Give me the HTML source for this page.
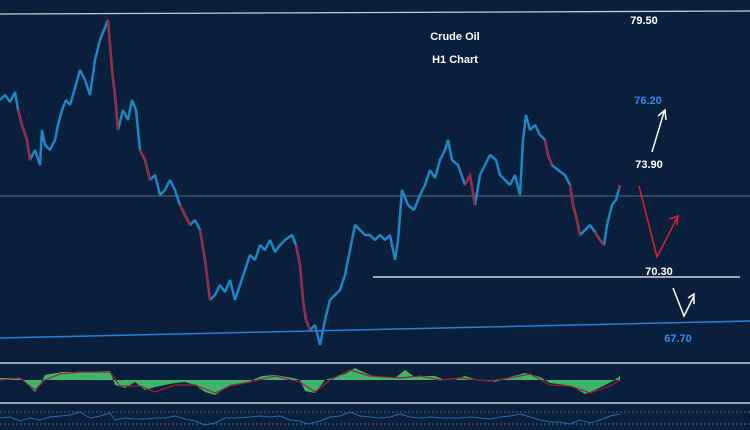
<!DOCTYPE html>
<html><head><meta charset="utf-8"><style>
html,body{margin:0;padding:0;background:#0a1f3b;width:750px;height:430px;overflow:hidden}
svg{display:block}
text{font-family:"Liberation Sans",sans-serif;font-weight:bold;font-size:11px}
</style></head><body>
<svg width="750" height="430" viewBox="0 0 750 430">
<rect width="750" height="430" fill="#0a1f3b"/>
<line x1="0" y1="14" x2="750" y2="11" stroke="#c8ccd2" stroke-width="1.3"/>
<line x1="0" y1="196" x2="750" y2="196" stroke="#5b6b80" stroke-width="1"/>
<line x1="373" y1="277" x2="740" y2="277" stroke="#d0d3d8" stroke-width="1.5"/>
<line x1="0" y1="338" x2="750" y2="321" stroke="#2a7fd6" stroke-width="1.5"/>
<polyline fill="none" stroke="#1f86c4" stroke-width="2.5" stroke-linejoin="bevel" points="0,100 5,95 10,102 15,92 18,110 22,125 27,140 30,160 35,150 40,165 42,130 45,145 50,150 55,140 58,125 62,110 66,100 70,105 75,88 80,70 85,80 90,95 95,60 100,40 104,30 108,20 110,45 112,70 115,95 118,130 123,110 128,120 132,100 136,110 140,150 145,160 150,180 155,175 160,195 165,190 170,180 175,190 180,205 185,215 190,225 195,220 200,230 205,260 210,300 215,295 220,285 225,292 230,280 235,300 240,285 245,270 250,255 255,260 260,245 265,250 270,240 275,252 280,245 285,240 292,235 296,245 300,265 303,300 306,320 310,330 315,325 320,345 325,320 330,300 335,295 340,290 345,275 350,250 355,225 360,230 365,235 370,235 375,240 380,235 385,240 390,235 395,260 398,240 402,190 408,205 414,210 420,195 425,185 430,170 435,178 440,160 445,150 448,140 452,160 458,165 465,185 470,175 475,205 480,175 485,165 490,155 496,160 500,175 505,180 510,185 515,175 520,195 523,140 526,115 530,130 535,125 540,135 545,140 548,155 552,165 558,170 565,175 570,185 573,205 577,220 580,235 585,230 590,225 595,232 600,240 604,245 607,225 612,205 616,200 620,185"/>
<g stroke="#b02030" stroke-width="2" fill="none">
<polyline points="18,110 22,125 27,140 30,160"/>
<polyline points="108,20 110,45 112,70 115,95 118,130"/>
<polyline points="140,150 145,160 150,180"/>
<polyline points="180,205 185,215 190,225"/>
<polyline points="200,230 205,260 210,300"/>
<polyline points="296,245 300,265 303,300 306,320 310,330"/>
<polyline points="465,185 470,175 475,205"/>
<polyline points="545,140 548,155 552,165"/>
<polyline points="570,185 573,205 577,220 580,235"/>
<polyline points="595,232 600,240 604,245"/>
<polyline points="618,190 620,185"/>
</g>
<text x="455" y="40" fill="#fff" text-anchor="middle">Crude Oil</text>
<text x="455" y="63" fill="#fff" text-anchor="middle">H1 Chart</text>
<text x="644" y="24" fill="#fff" text-anchor="middle">79.50</text>
<text x="648" y="104" fill="#2b8ef0" text-anchor="middle">76.20</text>
<text x="649" y="168" fill="#fff" text-anchor="middle">73.90</text>
<text x="659" y="275" fill="#fff" text-anchor="middle">70.30</text>
<text x="678" y="342" fill="#2b8ef0" text-anchor="middle">67.70</text>
<path d="M652,152 L664,112 M658,116 L665,110 L666,120" stroke="#fff" stroke-width="1.5" fill="none"/>
<path d="M639,186 L657,257 L677,218 M669,219 L678,216 L677,225" stroke="#e0202a" stroke-width="1.5" fill="none"/>
<path d="M673,288 L684,316 L694,296 M688,298 L694,294 L694,304" stroke="#fff" stroke-width="1.5" fill="none"/>
<line x1="0" y1="363" x2="750" y2="363" stroke="#9aa2ad" stroke-width="2"/>
<line x1="0" y1="403" x2="750" y2="403" stroke="#9aa2ad" stroke-width="2"/>
<path fill="#3db56a" d="M0,380 L0,378 L20,378 L25,382 L35,392 L40,385 L45,375 L62,372 L78,372 L82,372 L110,371 L115,385 L125,388 L135,382 L145,390 L155,387 L175,383 L185,382 L195,385 L205,392 L215,395 L230,385 L248,382 L262,376 L275,375 L293,378 L300,380 L305,391 L315,393 L325,380 L335,377 L345,374 L355,368 L370,375 L380,377 L395,378 L405,370 L415,377 L425,376 L435,376 L445,380 L455,380 L465,376 L475,379 L480,380 L488,380 L495,382 L510,377 L525,373 L540,377 L550,383 L565,385 L575,388 L585,394 L595,390 L605,385 L615,380 L620,376 L620,380 Z"/>
<polyline fill="none" stroke="#a02030" stroke-width="1.2" points="0,380 20,378 35,390 45,380 60,374 80,372 110,372 120,386 140,386 155,392 175,385 195,385 215,393 230,386 250,382 275,376 300,382 315,392 330,380 350,370 370,376 400,378 420,376 440,380 460,378 490,381 510,378 530,374 550,385 570,386 590,393 610,386 620,380"/>
<line x1="0" y1="412" x2="750" y2="412" stroke="#6b7585" stroke-width="0.8" stroke-dasharray="2,2"/>
<line x1="0" y1="424" x2="750" y2="424" stroke="#6b7585" stroke-width="0.8" stroke-dasharray="2,2"/>
<polyline fill="none" stroke="#2b6bb5" stroke-width="1" points="0,418 10,417 20,421 30,418 40,420 50,417 60,416 70,415 80,412 90,418 100,416 110,413 115,420 125,418 135,419 145,419 155,418 165,418 175,416 185,419 195,421 205,425 215,423 225,418 235,418 250,417 260,416 270,417 280,416 290,420 300,421 308,424 320,421 330,417 340,416 350,412 360,416 370,417 380,418 390,417 400,414 410,417 420,418 430,417 440,418 450,418 460,418 470,417 480,418 490,419 500,417 510,416 520,414 530,417 540,420 550,422 560,422 570,424 580,420 590,423 600,420 610,416 620,414"/>
</svg>
</body></html>
